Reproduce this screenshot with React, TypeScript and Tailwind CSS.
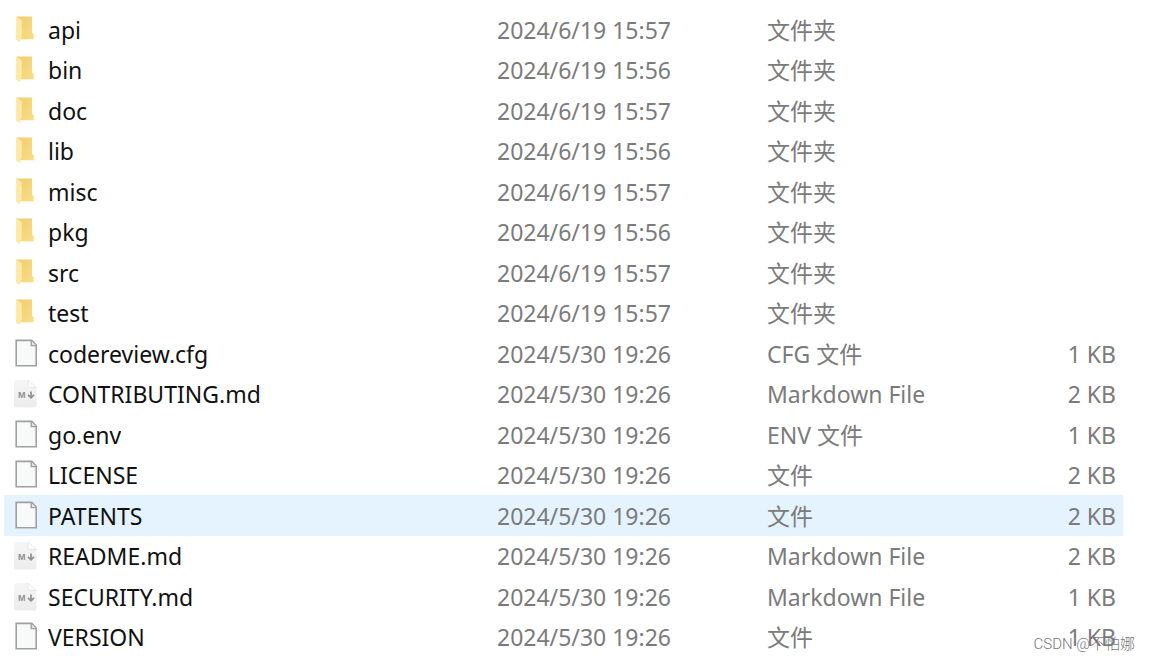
import { useState } from 'react'

type Kind = 'folder' | 'file' | 'markdown'

type Entry = {
  name: string
  kind: Kind
  modified: string
  type: string
  size?: string
}

const entries: Entry[] = [
  { name: 'api', kind: 'folder', modified: '2024/6/19 15:57', type: '文件夹' },
  { name: 'bin', kind: 'folder', modified: '2024/6/19 15:56', type: '文件夹' },
  { name: 'doc', kind: 'folder', modified: '2024/6/19 15:57', type: '文件夹' },
  { name: 'lib', kind: 'folder', modified: '2024/6/19 15:56', type: '文件夹' },
  { name: 'misc', kind: 'folder', modified: '2024/6/19 15:57', type: '文件夹' },
  { name: 'pkg', kind: 'folder', modified: '2024/6/19 15:56', type: '文件夹' },
  { name: 'src', kind: 'folder', modified: '2024/6/19 15:57', type: '文件夹' },
  { name: 'test', kind: 'folder', modified: '2024/6/19 15:57', type: '文件夹' },
  { name: 'codereview.cfg', kind: 'file', modified: '2024/5/30 19:26', type: 'CFG 文件', size: '1 KB' },
  { name: 'CONTRIBUTING.md', kind: 'markdown', modified: '2024/5/30 19:26', type: 'Markdown File', size: '2 KB' },
  { name: 'go.env', kind: 'file', modified: '2024/5/30 19:26', type: 'ENV 文件', size: '1 KB' },
  { name: 'LICENSE', kind: 'file', modified: '2024/5/30 19:26', type: '文件', size: '2 KB' },
  { name: 'PATENTS', kind: 'file', modified: '2024/5/30 19:26', type: '文件', size: '2 KB' },
  { name: 'README.md', kind: 'markdown', modified: '2024/5/30 19:26', type: 'Markdown File', size: '2 KB' },
  { name: 'SECURITY.md', kind: 'markdown', modified: '2024/5/30 19:26', type: 'Markdown File', size: '1 KB' },
  { name: 'VERSION', kind: 'file', modified: '2024/5/30 19:26', type: '文件', size: '1 KB' },
]

function FolderIcon() {
  return (
    <svg width="28" height="30" viewBox="0 0 28 30" className="shrink-0" aria-hidden="true">
      <defs>
        <linearGradient id="folder-back" x1="0" y1="0" x2="1" y2="1">
          <stop offset="0" stopColor="#efcd6c" />
          <stop offset="1" stopColor="#fbdd85" />
        </linearGradient>
      </defs>
      <path d="M4 1.5H20V18L21.7 19V24.2H8V5.5Z" fill="url(#folder-back)" />
      <path d="M4 1.5L9.2 4.7Q9.8 5.1 9.8 6V22L8.4 23.5V27.3L4 24.7Z" fill="#ffe9a6" />
    </svg>
  )
}

function FileIcon() {
  return (
    <svg width="28" height="30" viewBox="0 0 28 30" className="shrink-0" aria-hidden="true">
      <path d="M4.2 1.4H19.8L24.2 6V26.8H4.2Z" fill="#f8f9f9" stroke="#a0a0a0" strokeWidth="1.6" />
      <path d="M19.2 1.8V6.6H24" fill="#e4e4e4" stroke="#a0a0a0" strokeWidth="1.4" />
    </svg>
  )
}

function MarkdownIcon() {
  return (
    <svg width="28" height="30" viewBox="0 0 28 30" className="shrink-0" aria-hidden="true">
      <defs>
        <linearGradient id="md-page" x1="0" y1="0" x2="0" y2="1">
          <stop offset="0" stopColor="#f6f6f6" />
          <stop offset="1" stopColor="#ececec" />
        </linearGradient>
      </defs>
      <path d="M4.5 1H16L24.5 8.5V26Q24.5 28.5 22 28.5H4.5Q2 28.5 2 26V3.5Q2 1 4.5 1Z" fill="url(#md-page)" />
      <path d="M16 1L24.5 8.5H18Q16 8.5 16 6.5Z" fill="#fbfbfb" stroke="#dedede" strokeWidth="0.6" />
      <text x="6" y="19" fontSize="9" fontWeight="700" fill="#909090" fontFamily="Liberation Sans, sans-serif">M</text>
      <path d="M19 12.5V18.5M16 15.8L19 18.8L22 15.8" fill="none" stroke="#909090" strokeWidth="1.7" />
    </svg>
  )
}

function EntryIcon({ kind }: { kind: Kind }) {
  if (kind === 'folder') return <FolderIcon />
  if (kind === 'markdown') return <MarkdownIcon />
  return <FileIcon />
}

export default function App() {
  const [active, setActive] = useState('PATENTS')

  return (
    <main className="relative bg-white pt-[9px] pb-1 pl-1 pr-[27px] font-['Noto_Sans','Noto_Sans_CJK_SC',sans-serif] text-[23px] leading-8">
      <table className="w-full table-fixed border-collapse text-left text-[#7b7b7b]">
        <colgroup>
          <col />
          <col className="w-[270px]" />
          <col className="w-[236px]" />
          <col className="w-[120px]" />
        </colgroup>
        <tbody>
          {entries.map((entry) => (
            <tr
              key={entry.name}
              onMouseEnter={() => setActive(entry.name)}
              className={`odd:h-[41px] even:h-[40px] ${entry.name === active ? 'bg-[#e5f3ff]' : ''}`}
            >
              <th scope="row" className="p-0 font-normal text-[#111111]">
                <div className="flex items-center gap-2 pl-2">
                  <EntryIcon kind={entry.kind} />
                  <span className="truncate">{entry.name}</span>
                </div>
              </th>
              <td className="whitespace-nowrap p-0">{entry.modified}</td>
              <td className="whitespace-nowrap p-0">{entry.type}</td>
              <td className="whitespace-nowrap p-0 pr-[7px] text-right">{entry.size}</td>
            </tr>
          ))}
        </tbody>
      </table>
      <span className="pointer-events-none absolute right-[15px] bottom-[7px] font-['Roboto','Noto_Sans_CJK_SC',sans-serif] text-[15px] font-light leading-5 text-[#777777]">
        CSDN @不怕娜
      </span>
    </main>
  )
}
